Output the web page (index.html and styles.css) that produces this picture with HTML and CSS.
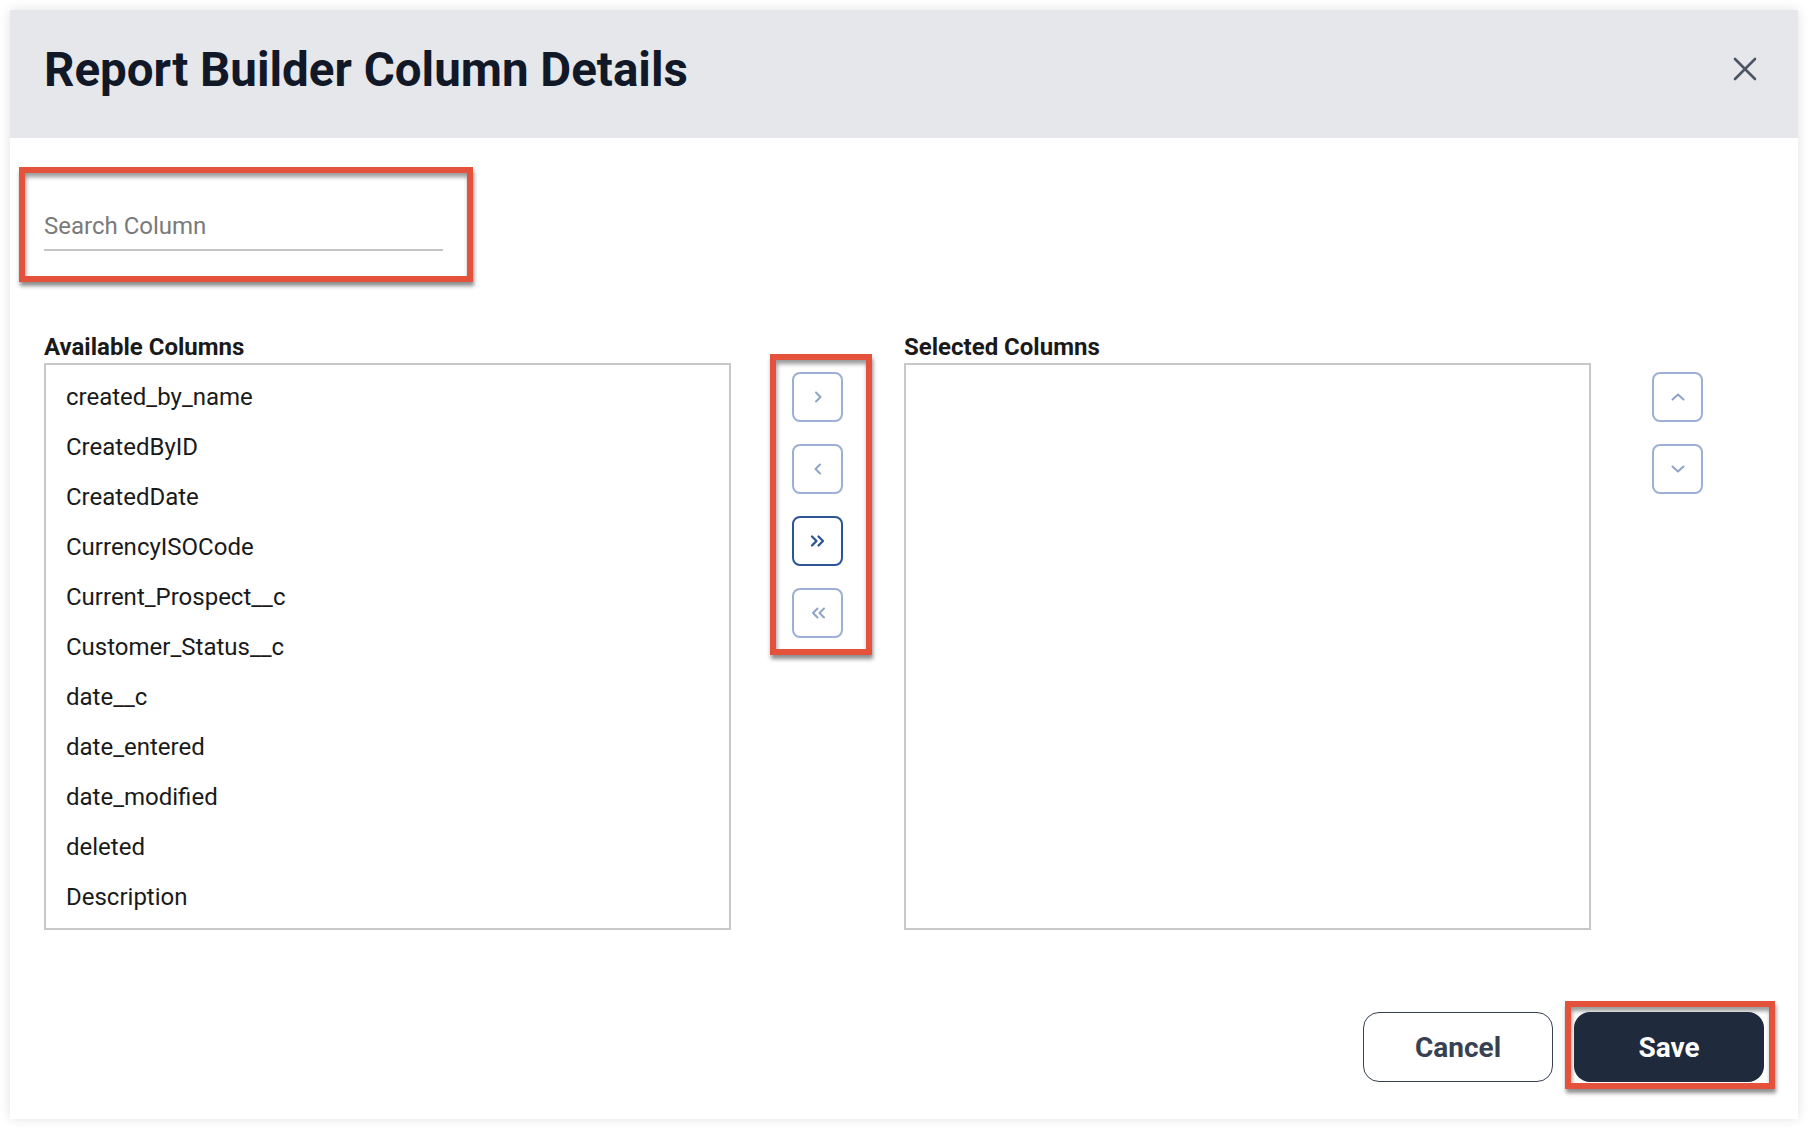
FILE: index.html
```html
<!DOCTYPE html>
<html lang="en">
<head>
    <meta charset="UTF-8">
    <meta name="viewport" content="width=device-width, initial-scale=1.0">
    <title>Report Builder Column Details</title>
    <link rel="stylesheet" href="styles.css">
</head>
<body>
    <div class="modal">
        <div class="modal-header">
            <h1 class="modal-title">Report Builder Column Details</h1>
            <button class="close-btn" aria-label="Close">
                <svg width="24" height="24" viewBox="0 0 24 24"><path d="M2 2L22 22M22 2L2 22" stroke="#4b5563" stroke-width="2.6" stroke-linecap="round" fill="none"/></svg>
            </button>
        </div>

        <div class="modal-body">
            <div class="highlight search-wrap">
                <input type="text" class="search-input" placeholder="Search Column">
            </div>

            <div class="picker">
                <div class="column">
                    <div class="column-label">Available Columns</div>
                    <ul class="column-list">
                        <li>created_by_name</li>
                        <li>CreatedByID</li>
                        <li>CreatedDate</li>
                        <li>CurrencyISOCode</li>
                        <li>Current_Prospect__c</li>
                        <li>Customer_Status__c</li>
                        <li>date__c</li>
                        <li>date_entered</li>
                        <li>date_modified</li>
                        <li>deleted</li>
                        <li>Description</li>
                    </ul>
                </div>

                <div class="highlight transfer">
                    <button class="icon-btn">
                        <svg width="14" height="14" viewBox="0 0 14 14"><path d="M5 2.5L9.5 7L5 11.5" /></svg>
                    </button>
                    <button class="icon-btn">
                        <svg width="14" height="14" viewBox="0 0 14 14"><path d="M9 2.5L4.5 7L9 11.5" /></svg>
                    </button>
                    <button class="icon-btn active">
                        <svg width="18" height="14" viewBox="0 0 18 14"><path d="M3 2.5L7.5 7L3 11.5M9.5 2.5L14 7L9.5 11.5" /></svg>
                    </button>
                    <button class="icon-btn">
                        <svg width="18" height="14" viewBox="0 0 18 14"><path d="M8.5 2.5L4 7L8.5 11.5M15 2.5L10.5 7L15 11.5" /></svg>
                    </button>
                </div>

                <div class="column">
                    <div class="column-label">Selected Columns</div>
                    <ul class="column-list"></ul>
                </div>

                <div class="order">
                    <button class="icon-btn">
                        <svg width="16" height="14" viewBox="0 0 16 14"><path d="M2.5 9.5L8 4.5L13.5 9.5" /></svg>
                    </button>
                    <button class="icon-btn">
                        <svg width="16" height="14" viewBox="0 0 16 14"><path d="M2.5 4.5L8 9.5L13.5 4.5" /></svg>
                    </button>
                </div>
            </div>

            <div class="modal-footer">
                <button class="btn btn-cancel">Cancel</button>
                <div class="highlight save-wrap">
                    <button class="btn btn-save">Save</button>
                </div>
            </div>
        </div>
    </div>
</body>
</html>
```

FILE: styles.css
```css
/* Report builder column picker */

body {
    font-family: 'Roboto', 'Liberation Sans', sans-serif;
    margin: 0;
    padding: 10px;
    background: #ffffff;
    color: #1a1a1a;
}

.modal {
    width: 1788px;
    height: 1109px;
    background: #fff;
    box-shadow: 0 0 10px rgba(0, 0, 0, 0.12);
    display: flex;
    flex-direction: column;
}

.modal-header {
    height: 128px;
    box-sizing: border-box;
    background: #e5e7eb;
    display: flex;
    justify-content: space-between;
    align-items: flex-start;
    padding: 32px 41px 0 34px;
}

.modal-title {
    margin: 0;
    font-size: 47.5px;
    line-height: 56px;
    font-weight: 700;
    color: #111827;
}

.close-btn {
    border: none;
    background: none;
    padding: 0;
    margin-top: 15px;
    width: 24px;
    height: 24px;
    cursor: pointer;
}

.modal-body {
    flex: 1;
    display: flex;
    flex-direction: column;
    padding: 29px 23px 30px 34px;
}

/* red annotation frames */
.highlight {
    border: 6px solid #e5523b;
    box-shadow: 1px 4px 4px rgba(0, 0, 0, 0.45), inset 1px 4px 4px rgba(0, 0, 0, 0.4);
}

.search-wrap {
    align-self: flex-start;
    margin-left: -25px;
    padding: 30px 24px 25px 19px;
}

.search-input {
    display: block;
    width: 399px;
    height: 48px;
    box-sizing: border-box;
    padding: 0;
    border: none;
    border-bottom: 2px solid #c4c4c4;
    font-family: inherit;
    font-size: 24px;
    color: #333;
    outline: none;
    background: transparent;
}

.search-input::placeholder {
    color: #7a7a7a;
}

.picker {
    display: flex;
    align-items: flex-start;
    margin-top: 51px;
}

.column {
    width: 687px;
}

.column-label {
    font-size: 24px;
    line-height: 28px;
    font-weight: 700;
    margin-bottom: 2px;
}

.column-list {
    list-style: none;
    margin: 0;
    padding: 7px 0 0;
    height: 567px;
    box-sizing: border-box;
    border: 2px solid #c8c8c8;
    overflow: hidden;
}

.column-list li {
    font-size: 24px;
    line-height: 50px;
    height: 50px;
    padding-left: 20px;
}

.transfer {
    display: flex;
    flex-direction: column;
    gap: 22px;
    margin: 21px 32px 0 39px;
    padding: 12px 23px 11px 16px;
}

.order {
    display: flex;
    flex-direction: column;
    gap: 22px;
    margin: 39px 0 0 61px;
}

.icon-btn {
    width: 51px;
    height: 50px;
    box-sizing: border-box;
    border: 2px solid #9cb0d3;
    border-radius: 8px;
    background: #fff;
    display: flex;
    align-items: center;
    justify-content: center;
    padding: 0;
    cursor: pointer;
}

.icon-btn path {
    fill: none;
    stroke: #8ea3c8;
    stroke-width: 2;
    stroke-linecap: round;
    stroke-linejoin: round;
}

.icon-btn.active {
    border-color: #2d5496;
}

.icon-btn.active path {
    stroke: #2d5496;
    stroke-width: 2.3;
}

.modal-footer {
    margin-top: auto;
    display: flex;
    justify-content: flex-end;
    align-items: flex-start;
}

.btn {
    width: 190px;
    height: 70px;
    box-sizing: border-box;
    border-radius: 16px;
    font-family: inherit;
    font-size: 28px;
    font-weight: 700;
    cursor: pointer;
}

.btn-cancel {
    margin-top: 11px;
    margin-right: 12px;
    background: #fff;
    border: 1px solid #374151;
    color: #374151;
}

.save-wrap {
    padding: 5px 5px 1px 3px;
}

.btn-save {
    display: block;
    background: #1f2a3d;
    border: none;
    color: #fff;
}
```
